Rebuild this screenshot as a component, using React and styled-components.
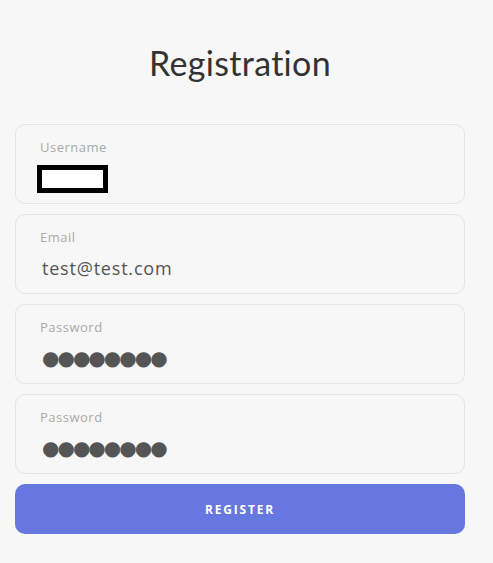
import styled, { createGlobalStyle } from "styled-components";

const GlobalStyle = createGlobalStyle`
    html, body {
        margin: 0;
        padding: 0;
        background: #f7f7f7;
    }
`;

const fields = [
    { label: "Username", kind: "redacted" },
    { label: "Email", kind: "text", value: "test@test.com" },
    { label: "Password", kind: "password", value: 8 },
    { label: "Password", kind: "password", value: 8 },
];

export default function App() {
    return (
        <Page>
            <GlobalStyle />
            <Title>Registration</Title>
            <Form>
                {fields.map((f, i) => (
                    <Field key={i}>
                        <Label>{f.label}</Label>
                        {f.kind === "redacted" && <Redacted />}
                        {f.kind === "text" && <Value>{f.value}</Value>}
                        {f.kind === "password" && (
                            <Dots>{"●".repeat(f.value)}</Dots>
                        )}
                    </Field>
                ))}
                <Button>Register</Button>
            </Form>
        </Page>
    );
}

const Page = styled.div`
    width: 480px;
    box-sizing: border-box;
    padding: 0 15px;
    height: 563px;
    font-family: "Open Sans", sans-serif;
`;
const Title = styled.h1`
    margin: 0;
    padding-top: 42px;
    height: 124px;
    box-sizing: border-box;
    text-align: center;
    font-family: "Lato", sans-serif;
    font-weight: 400;
    font-size: 34px;
    color: #333;
    letter-spacing: 0.3px;
`;
const Form = styled.div`
    display: flex;
    flex-direction: column;
    gap: 10px;
`;
const Field = styled.div`
    height: 80px;
    box-sizing: border-box;
    border: 1px solid #e4e4e4;
    border-radius: 10px;
    padding: 13px 24px 0;
    display: flex;
    flex-direction: column;
`;
const Label = styled.div`
    font-size: 13px;
    color: #aaa;
    line-height: 18px;
    letter-spacing: 0.5px;
`;
const Value = styled.div`
    margin-top: 9px;
    padding-left: 2px;
    font-size: 18px;
    line-height: 26px;
    color: #555;
    letter-spacing: 0.8px;
`;
const Dots = styled.div`
    margin-top: 9px;
    padding-left: 2px;
    font-family: "DejaVu Sans", sans-serif;
    font-size: 20px;
    line-height: 26px;
    color: #555;
    letter-spacing: -2px;
`;
const Redacted = styled.div`
    margin-top: 9px;
    margin-left: -3px;
    width: 71px;
    height: 28px;
    box-sizing: border-box;
    border: 5px solid #000;
    background: #fff;
`;
const Button = styled.button`
    height: 50px;
    border: none;
    border-radius: 10px;
    background: #6777e0;
    color: #fff;
    font-family: "Open Sans", sans-serif;
    font-weight: 700;
    font-size: 12px;
    letter-spacing: 1.8px;
    text-transform: uppercase;
`;
